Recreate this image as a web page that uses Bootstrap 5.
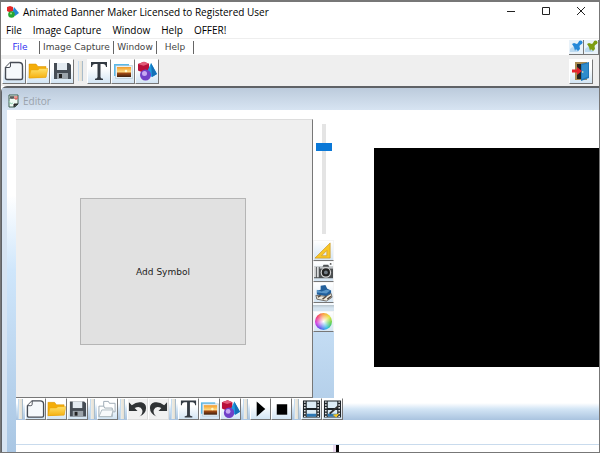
<!DOCTYPE html>
<html lang="en">
<head>
<meta charset="utf-8">
<meta name="viewport" content="width=device-width, initial-scale=1">
<title>Animated Banner Maker</title>
<link href="https://cdn.jsdelivr.net/npm/bootstrap@5.3.0/dist/css/bootstrap.min.css" rel="stylesheet">
<style>
  body { font-family: "Open Sans", sans-serif; font-size: 10px; line-height: 16px; color: #222; }
  a { color: inherit; text-decoration: none; }
  button { padding: 0; }
  .app-window { border: 1px solid #777; border-top-width: 2px; }
  .title-bar { height: 19px; padding-left: 6px; color: #000; }
  .title-bar svg { width: 12px; height: 12px; }
  .win-btn { width: 35px; height: 19px; border: 0; background: none; line-height: 0; }
  .menu-bar { height: 17px; padding-left: 5px; gap: 11px; color: #000; }
  .tab-strip { height: 17px; border-top: 1px solid #eee; font-family: "DejaVu Sans", sans-serif; font-size: 9px; color: #444; }
  .tab-strip .tab { padding: 0; border-right: 1px solid #666; height: 13px; line-height: 13px; text-align: center; white-space: nowrap; }
  .tab.current { color: #3030f0; width: 39px; }
  .tab.wide { width: 74px; }
  .tab.mid { width: 43px; }
  .tab.short { width: 37px; }
  .pin-btn { width: 15px; height: 15px; border: 0; border-right: 1px solid #777; border-bottom: 1px solid #777; background: #e9f2f9; line-height: 0; }
  .pin-blue { color: #2588d8; }
  .pin-green { color: #7c9c12; }
  .main-tools { height: 31px; background: #efefef; padding: 3px 6px 2px 1px; }
  .tool { width: 24px; height: 25px; border: 1px solid #fff; border-right-color: #777; border-bottom-color: #777; background: linear-gradient(#fff 35%, #d3e5f4); line-height: 0; }
  .tool svg { width: 20px; height: 20px; }
  .divider { width: 5px; height: 20px; background: linear-gradient(90deg, #c5dcf0 1px, #efece4 1px, #e4e0d4 4px, #a9bccb 4px); }
  .editor-window { border-top: 2px solid #5f6266; border-left: 1px solid #5f6266; border-top-left-radius: 6px; background: #d7e4f2; }
  .editor-title { height: 22px; padding: 3px 0 0 6px; gap: 4px; background: linear-gradient(#bccbdc, #d7e4f2); color: #9aa2ab; }
  .editor-title svg { width: 11px; height: 14px; }
  .editor-body { margin-left: 5px; padding-left: 9px; background: linear-gradient(#fff 85px, #cfe6fb 160px, #a9c6e3); }
  .work-row { height: 288px; }
  .top-gap { height: 9px; }
  .symbol-panel { width: 297px; background: #efefef; border-top: 1px solid #ddd; border-right: 1px solid #777; border-bottom: 1px solid #777; }
  .symbol-btn { width: 166px; height: 147px; margin-top: 26px; margin-right: 2px; border: 1px solid #b5b5b5; background: #e1e1e1; font-family: "DejaVu Sans", sans-serif; font-size: 9px; color: #222; }
  .side-strip { width: 21px; background: linear-gradient(#fff 85px, #cfe6fb 160px, #b5d0ea); }
  .slider-box { height: 121px; padding-top: 5px; background: #fff; }
  .zoom-range { appearance: none; -webkit-appearance: none; writing-mode: vertical-lr; width: 16px; height: 110px; margin: 0; background: linear-gradient(90deg, transparent 6px, #e4e4e4 6px, #e4e4e4 10px, transparent 10px); }
  .zoom-range::-webkit-slider-thumb { -webkit-appearance: none; width: 16px; height: 8px; background: #0a78d7; border: 0; }
  .side-tool { width: 21px; height: 21px; border: 1px solid #f5f5f5; border-bottom: 1px solid #777; background: linear-gradient(#fff, #d6e6f4); line-height: 0; }
  .side-tool svg { width: 19px; height: 19px; }
  .side-split { height: 8px; background: linear-gradient(#f4f9fd 2px, #b6c3cc 2px, #d5e4f0 5px); }
  .color-wheel { width: 17px; height: 17px; background: radial-gradient(#fff, transparent 65%), conic-gradient(#f9a13b, #e8e33c, #58d050, #32b9e8, #5d55ee, #d23ee0, #f34372, #f9a13b); }
  .stage { padding: 29px 0 0 40px; background: #fff; }
  .banner { height: 219px; background: #000; }
  .edit-tools { height: 22px; background: linear-gradient(#fff 5px, #d3e5f5 11px, #a9c3df); }
  .edit-tools .tool { width: 21px; height: 22px; }
  .edit-tools .tool svg { width: 19px; height: 20px; }
  .edit-tools .divider { height: 20px; margin: 1px 2px 0 2px; width: 5px; }
  .edit-tools .flat { background: #f1f1f1; border-right-color: #ddd; border-bottom-color: #ddd; }
  .timeline { background: #fff; }
  .time-space { height: 25px; border-bottom: 1px solid #c9dbed; }
  .playhead { width: 6px; height: 8px; margin-left: 317px; border-left: 3px solid #ead9ee; background: #000; }
  .track { width: 18px; height: 1px; margin: 7px 0 0 17px; background: #9aa5ba; }
</style>
<script src="https://cdn.jsdelivr.net/npm/bootstrap@5.3.0/dist/js/bootstrap.bundle.min.js"></script>
</head>
<body>
<svg width="0" height="0" class="position-absolute" aria-hidden="true">
  <defs>
    <linearGradient id="gold" x1="0" y1="0" x2="0" y2="1"><stop offset="0" stop-color="#ffe16a"/><stop offset="1" stop-color="#f5b010"/></linearGradient>
    <linearGradient id="sunset" x1="0" y1="0" x2="0" y2="1"><stop offset="0" stop-color="#f39a28"/><stop offset=".5" stop-color="#ffdc84"/><stop offset=".6" stop-color="#a74c12"/><stop offset="1" stop-color="#3c2010"/></linearGradient>
  </defs>
  <symbol id="i-page" viewBox="0 0 20 20"><path d="M6.500 1.500H15q3.500 0 3.500 3.500V17q0 1.500-1.500 1.500H3Q1.500 18.500 1.500 17V6.500Z" fill="#f6f9fc" stroke="#474c55" stroke-width="1.400"/><path d="M6.500 1.500V5q0 1.500-1.500 1.500H1.500" fill="#fff" stroke="#474c55"/></symbol>
  <symbol id="i-folder" viewBox="0 0 20 20"><path d="M1 17V3h7l2 2.500h8V16Z" fill="#f4ad09" stroke="#d99100" stroke-width=".5"/><path d="M1 17 3 9H10l1.500-1.500H20L18 16.500Z" fill="url(#gold)" stroke="#e7a000" stroke-width=".4"/></symbol>
  <symbol id="i-save" viewBox="0 0 20 20"><path d="M2 2h15l2 2v14H2Z" fill="#464d55"/><path d="M5 2h10v7H5Z" fill="#e4ebf1"/><path d="M5 12h11v6H5Z" fill="#9ba3aa"/><path d="M7 13h3v4H7Z" fill="#222"/></symbol>
  <symbol id="i-text" viewBox="0 0 20 20"><path d="M2 1h16v5h-1q-.4-3-3-3h-2.500v13q0 1.700 2.500 1.700V19H6v-1.300q2.500 0 2.500-1.700V3H6Q3.400 3 3 6H2Z" fill="#343b43"/></symbol>
  <symbol id="i-photo" viewBox="0 0 20 20"><path d="M1 3h15v12H1Z" fill="#58b9ea"/><path d="M2.500 4.500h17v13h-17Z" fill="#e6f0f5" stroke="#8cabc0" stroke-width=".4"/><path d="M4 6h14v10H4Z" fill="url(#sunset)"/><circle cx="13" cy="10" r="1.300" fill="#fff9ce"/></symbol>
  <symbol id="i-shapes" viewBox="0 0 20 20"><path d="M1 3 7 .8l5 2v6.700L7 12l-6-2.500Z" fill="#b9103a"/><path d="m1 3 5.500 1.800L12 2.800 7 .8Z" fill="#e35c78"/><path d="m14 2 6 11-5 3-6-3Z" fill="#1e9ce0"/><path d="m14 2 1 14 5-3Z" fill="#1470b8"/><circle cx="8.500" cy="14" r="5.500" fill="#7140c8"/><circle cx="7.500" cy="12.500" r="2.500" fill="#c7a9f2"/></symbol>
  <symbol id="i-pin" viewBox="0 0 14 14"><path d="M1 12q-1-4 3-5 1-3 4-1 4 2 1 6Z" fill="#bcd9ef"/><path d="m3 4 2-1 3 1 2-2 2 2-1.500 2 .5 3-2 2-2-2-1 2-1-4Z" fill="currentColor"/><circle cx="11.500" cy="2.500" r="2" fill="currentColor"/></symbol>
  <symbol id="i-exit" viewBox="0 0 20 20"><path d="M4 1h12v18H4Z" fill="#a88a51"/><path d="M6 3h8v15H6Z" fill="#24231f"/><path d="m10 3 8-2v16l-8 3Z" fill="#1f76b8"/><path d="m11 4 6-1.500v13L11 18Z" fill="#2f8ccc"/><path d="M1 8.500h5V6l5 4-5 4v-2.500H1Z" fill="#e5232d"/><circle cx="11.700" cy="11" r=".8" fill="#fff3af"/></symbol>
  <symbol id="i-ruler" viewBox="0 0 20 20"><path d="M17 2v16H1Zm-3.500 8L8 15.500h5.500Z" fill="#f8c628" fill-rule="evenodd" stroke="#ca941c" stroke-width=".7"/></symbol>
  <symbol id="i-camera" viewBox="0 0 20 20"><path d="M0 5h9l1-2h5l1 2h4v12H0Z" fill="#4d5052"/><path d="M0 5h2v11H0Zm3 0h2v11H3Z" fill="#d8dadb"/><path d="M6 5h14v2H6Z" fill="#bfc2c4"/><circle cx="12.500" cy="11" r="5.500" fill="#d8d8d8"/><circle cx="12.500" cy="11" r="4.300" fill="#222"/><circle cx="12.500" cy="11" r="2" fill="#727b84"/><circle cx="17.500" cy="2" r="1" fill="#555"/></symbol>
  <symbol id="i-stamp" viewBox="0 0 20 20"><path d="m7 3 5-1 2 4 4 2v4l-5 2-10-2 0-4 4-1Z" fill="#225f9b"/><path d="m3 7 5 2 5-2 4 1-4 3-10-1Z" fill="#5a96c8"/><path d="m2 13 11 1 5-3 1 4-6 4-10-2Z" fill="#eee8da" stroke="#6e6a65"/><path d="m4 15 3-2M9 17l4-3M14 17l4-3" stroke="#564a40" stroke-width="1.500"/></symbol>
  <symbol id="i-copy" viewBox="0 0 20 20"><path d="M6 2h5l1 2h6v9H6Z" fill="#fff" stroke="#9eabb5"/><path d="M1 18V7h5l1 2h8v9Z" fill="#fff" stroke="#9eabb5"/><path d="M1 18 4 11h12l-2 7Z" fill="#f8fafb" stroke="#aeb9c0"/></symbol>
  <symbol id="i-undo" viewBox="0 0 20 20"><path d="M1 3v9h9L7 9q6-3 8 2 1 4-3 7 7-3 7-9 0-5-5-6Q9 2 4 6Z" fill="#303335"/></symbol>
  <symbol id="i-redo" viewBox="0 0 20 20"><path d="M19 3v9h-9l3-3Q7 6 5 11q-1 4 3 7-7-3-7-9 0-5 5-6 5-1 10 3Z" fill="#303335"/></symbol>
  <symbol id="i-film" viewBox="0 0 20 20"><path d="M1 1h18v18H1Z" fill="#1d2429"/><path d="M5 2h10v7H5Zm0 9h10v7H5Z" fill="#dcecf6"/><path d="M5 15h10v3H5Z" fill="#2b77b4"/><path d="M3 2v17M17 2v17" stroke="#fff" stroke-width="1.500" stroke-dasharray="1.500 1.500"/></symbol>
  <symbol id="i-logo" viewBox="0 0 12 12"><path d="M0 1 3 0l3 1v4L3 6.500 0 5Z" fill="#e02727"/><path d="m7 1 5 6-4 3-3-2Z" fill="#2687d3"/><circle cx="4.500" cy="8.500" r="3.300" fill="#28a733"/><circle cx="4" cy="7.500" r="1" fill="#a3e991"/></symbol>
  <symbol id="i-doc" viewBox="0 0 11 14"><path d="M1 1h9v9l-3 3H1Z" fill="#eefaf2" stroke="#3c5f50"/><path d="m2 5 1-3 1 3 1-3 1 3" fill="none" stroke="#333" stroke-width=".8"/><path d="M7 2v3h2V2" fill="none" stroke="#db3a37"/><path d="m1 7 2 3 2-1" fill="none" stroke="#98d3b5"/><path d="M6 13v-3h4" fill="#333" stroke="#222"/></symbol>
</svg>

<div class="app-window d-flex flex-column vh-100 overflow-hidden bg-white">
  <header class="title-bar d-flex align-items-center flex-shrink-0">
    <svg class="me-1"><use href="#i-logo"/></svg>
    <span class="text-nowrap">Animated Banner Maker Licensed to Registered User</span>
    <div class="d-flex ms-auto">
      <button class="win-btn" type="button" aria-label="Minimize"><svg width="10" height="10"><path d="M1 5.500h8" stroke="#222"/></svg></button>
      <button class="win-btn" type="button" aria-label="Maximize"><svg width="10" height="10"><path d="M1.500 1.500h7v7h-7Z" fill="none" stroke="#222"/></svg></button>
      <button class="win-btn" type="button" aria-label="Close"><svg width="10" height="10"><path d="m1 1 8 8M9 1 1 9" stroke="#222"/></svg></button>
    </div>
  </header>
  <nav class="menu-bar d-flex align-items-center flex-shrink-0" aria-label="Main menu">
    <a href="#">File</a><a href="#">Image Capture</a><a href="#">Window</a><a href="#">Help</a><a href="#">OFFER!</a>
  </nav>
  <nav class="tab-strip d-flex align-items-center flex-shrink-0" aria-label="Tool sets">
    <a class="tab current" href="#">File</a><a class="tab wide" href="#">Image Capture</a><a class="tab mid" href="#">Window</a><a class="tab short" href="#">Help</a>
    <div class="d-flex ms-auto">
      <button class="pin-btn pin-blue" type="button" aria-label="Pin"><svg width="14" height="14"><use href="#i-pin"/></svg></button>
      <button class="pin-btn pin-green" type="button" aria-label="Pin all"><svg width="14" height="14"><use href="#i-pin"/></svg></button>
    </div>
  </nav>
  <div class="main-tools d-flex align-items-center flex-shrink-0">
    <button class="tool" type="button" aria-label="New"><svg><use href="#i-page"/></svg></button>
    <button class="tool" type="button" aria-label="Open"><svg><use href="#i-folder"/></svg></button>
    <button class="tool" type="button" aria-label="Save"><svg><use href="#i-save"/></svg></button>
    <span class="divider mx-1"></span>
    <button class="tool" type="button" aria-label="Text"><svg><use href="#i-text"/></svg></button>
    <button class="tool" type="button" aria-label="Image"><svg><use href="#i-photo"/></svg></button>
    <button class="tool" type="button" aria-label="Shapes"><svg><use href="#i-shapes"/></svg></button>
    <button class="tool ms-auto" type="button" aria-label="Exit"><svg><use href="#i-exit"/></svg></button>
  </div>

  <main class="editor-window d-flex flex-column flex-grow-1">
    <div class="editor-title d-flex align-items-center">
      <svg><use href="#i-doc"/></svg><span>Editor</span>
    </div>
    <div class="editor-body d-flex flex-column flex-grow-1">
      <div class="work-row d-flex flex-column">
        <div class="top-gap bg-white"></div>
        <div class="d-flex flex-grow-1">
          <section class="symbol-panel d-flex align-items-center justify-content-center flex-shrink-0">
            <button class="symbol-btn" type="button">Add Symbol</button>
          </section>
          <aside class="side-strip flex-shrink-0">
            <div class="slider-box d-flex justify-content-center">
              <input class="zoom-range" type="range" min="0" max="100" value="19" aria-label="Zoom">
            </div>
            <button class="side-tool d-block" type="button" aria-label="Ruler"><svg><use href="#i-ruler"/></svg></button>
            <button class="side-tool d-block" type="button" aria-label="Snapshot"><svg><use href="#i-camera"/></svg></button>
            <button class="side-tool d-block" type="button" aria-label="Effects"><svg><use href="#i-stamp"/></svg></button>
            <div class="side-split"></div>
            <button class="side-tool d-block" type="button" aria-label="Colors"><span class="color-wheel d-inline-block rounded-circle"></span></button>
          </aside>
          <section class="stage flex-grow-1" aria-label="Stage"><div class="banner"></div></section>
        </div>
      </div>
      <div class="edit-tools d-flex flex-shrink-0">
        <span class="divider"></span>
        <button class="tool" type="button" aria-label="New banner"><svg><use href="#i-page"/></svg></button>
        <button class="tool" type="button" aria-label="Open banner"><svg><use href="#i-folder"/></svg></button>
        <button class="tool" type="button" aria-label="Save banner"><svg><use href="#i-save"/></svg></button>
        <span class="divider"></span>
        <button class="tool" type="button" aria-label="Duplicate"><svg><use href="#i-copy"/></svg></button>
        <span class="divider"></span>
        <button class="tool flat" type="button" aria-label="Undo"><svg><use href="#i-undo"/></svg></button>
        <button class="tool flat" type="button" aria-label="Redo"><svg><use href="#i-redo"/></svg></button>
        <span class="divider"></span>
        <button class="tool" type="button" aria-label="Add text"><svg><use href="#i-text"/></svg></button>
        <button class="tool" type="button" aria-label="Add image"><svg><use href="#i-photo"/></svg></button>
        <button class="tool" type="button" aria-label="Add shape"><svg><use href="#i-shapes"/></svg></button>
        <span class="divider"></span>
        <button class="tool" type="button" aria-label="Play"><svg viewBox="0 0 20 20"><path d="m6 2 9 8-9 8Z"/></svg></button>
        <button class="tool" type="button" aria-label="Stop"><svg viewBox="0 0 20 20"><path d="M5 5h11v11H5Z"/></svg></button>
        <span class="divider"></span>
        <button class="tool" type="button" aria-label="Frames"><svg><use href="#i-film"/></svg></button>
        <button class="tool" type="button" aria-label="Edit frames"><svg viewBox="0 0 20 20"><use href="#i-film"/><path d="m7 15 9-8" stroke="#333" stroke-width="2"/><path d="m10 16 7-1-3 4Z" fill="#f5c51d"/></svg></button>
      </div>
      <div class="timeline flex-grow-1">
        <div class="time-space"></div>
        <div class="d-flex"><div class="playhead"></div><div class="track"></div></div>
      </div>
    </div>
  </main>
</div>
</body>
</html>
